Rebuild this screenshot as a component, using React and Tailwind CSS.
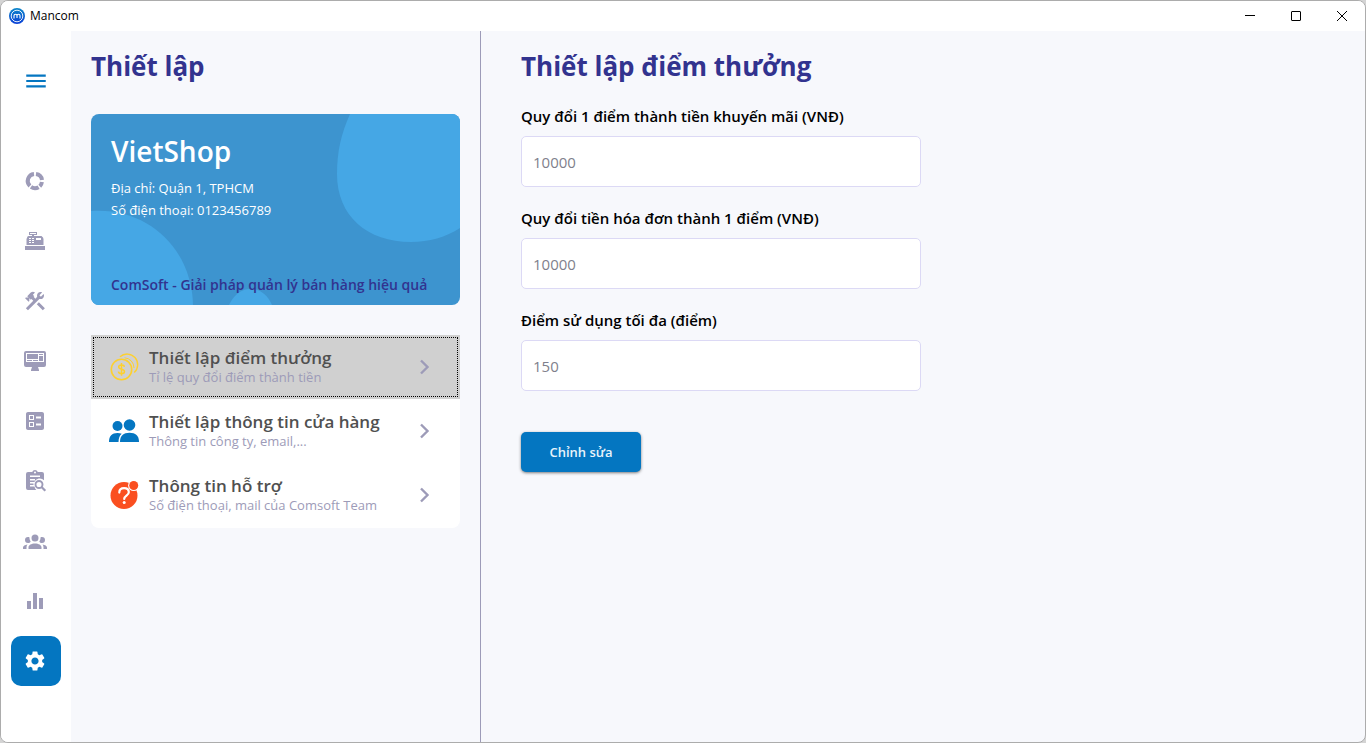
import React from "react";
import { MdBallot, MdEqualizer, MdMenu, MdSettings } from "react-icons/md";

function DonutIcon() {
  return (
    <svg viewBox="0 0 24 24" className="size-6" aria-hidden="true">
      <g fill="none" stroke="currentColor" strokeWidth="4">
        <path d="M13 5A7 7 0 0 1 19 11" />
        <path d="M18.9 13A7 7 0 0 1 16.8 17.200" />
        <path d="M15.600 18.200A7 7 0 0 1 8 17.900" />
        <path d="M6.900 17A7 7 0 0 1 11 5" />
      </g>
    </svg>
  );
}

function RegisterIcon() {
  return (
    <svg viewBox="0 0 24 24" className="size-6" aria-hidden="true">
      <path
        fill="currentColor"
        fillRule="evenodd"
        d="M2 17h20v4H2zM6 3h8v3h-3v1h7.500L20 8.500 20.500 10v6H3.500v-6L4.500 7.500 5.500 7H9V6H6zM7 4v1h6V4zM13 9v2h5V9zM6 9v1h2V9zM9 9v1h2V9zM6 11v1h2v-1zM9 11v1h2v-1zM6 13v1h2v-1zM9 13v1h2v-1z"
      />
    </svg>
  );
}

function ToolsIcon() {
  return (
    <svg viewBox="0 0 24 24" className="size-6" aria-hidden="true">
      <path
        fill="currentColor"
        d="M13.78 15.3L19.78 21.3L21.89 19.14L15.89 13.14L13.78 15.3M17.5 10.1C17.11 10.1 16.69 10.05 16.36 9.91L4.97 21.25L2.86 19.14L10.27 11.74L8.5 9.96L7.78 10.66L6.33 9.25V12.11L5.63 12.81L2.11 9.25L2.81 8.55H5.62L4.22 7.14L7.78 3.58C8.95 2.41 10.83 2.41 12 3.58L9.89 5.74L11.3 7.14L10.59 7.85L12.38 9.63L14.2 7.75C14.06 7.42 14 7 14 6.63C14 4.66 15.56 3.11 17.5 3.11C18.09 3.11 18.61 3.25 19.08 3.53L16.41 6.2L17.91 7.7L20.58 5.03C20.86 5.5 21 6 21 6.63C21 8.55 19.45 10.1 17.5 10.1Z"
      />
    </svg>
  );
}

function MonitorIcon() {
  return (
    <svg viewBox="0 0 24 24" className="size-6" aria-hidden="true">
      <path
        fill="currentColor"
        fillRule="evenodd"
        d="M3 2h18a2 2 0 0 1 2 2v12a2 2 0 0 1-2 2h-6l1 3v1H8v-1l1-3H3a2 2 0 0 1-2-2V4a2 2 0 0 1 2-2zM3 4v9h18V4zM4 5h11v5H4zM16 5h4v1h-4zM16 7h4v5h-4zM4 11h5v1H4zM10 11h5v1h-5z"
      />
    </svg>
  );
}

function ClipboardSearchIcon() {
  return (
    <svg viewBox="0 0 24 24" className="size-6" aria-hidden="true">
      <path
        fill="currentColor"
        fillRule="evenodd"
        d="M5 3h4.200a3 3 0 0 1 5.600 0H19a2 2 0 0 1 2 2v6.200A6 6 0 0 0 11.300 13H7v1.500h3.500V16H7v1.500h4.500a6 6 0 0 0 1.800 3.500H5a2 2 0 0 1-2-2V5a2 2 0 0 1 2-2zM12 2.500a1 1 0 1 0 0 2 1 1 0 0 0 0-2zM7 6.500V8h10V6.500zM7 10v1.500h5V10z"
      />
      <circle cx="16" cy="15.500" r="3.500" fill="none" stroke="currentColor" strokeWidth="1.900" />
      <path d="M18.500 18L22.300 21.800" stroke="currentColor" strokeWidth="2.200" />
    </svg>
  );
}

function GroupIcon() {
  return (
    <svg viewBox="0 0 24 24" className="size-6" aria-hidden="true">
      <path
        fill="currentColor"
        d="M12 5.500A3.500 3.500 0 0 1 15.500 9 3.500 3.500 0 0 1 12 12.500 3.500 3.500 0 0 1 8.500 9 3.500 3.500 0 0 1 12 5.500M5 8C5.560 8 6.080 8.150 6.530 8.420 6.380 9.850 6.800 11.270 7.660 12.380 7.160 13.340 6.160 14 5 14A3 3 0 0 1 2 11 3 3 0 0 1 5 8M19 8A3 3 0 0 1 22 11 3 3 0 0 1 19 14C17.840 14 16.840 13.340 16.340 12.380 17.200 11.270 17.620 9.850 17.470 8.420 17.920 8.150 18.440 8 19 8M5.500 18.250C5.500 16.180 8.410 14.500 12 14.500S18.500 16.180 18.500 18.250V20H5.500V18.250M0 20V18.500C0 17.110 1.890 15.940 4.450 15.600 3.860 16.280 3.500 17.220 3.500 18.250V20H0M24 20H20.500V18.250C20.500 17.220 20.140 16.280 19.550 15.600 22.110 15.940 24 17.110 24 18.500V20Z"
      />
    </svg>
  );
}

function CoinsIcon() {
  return (
    <svg viewBox="0 0 30 30" className="size-[30px]" aria-hidden="true">
      <g fill="none" stroke="#fdd02f">
        <circle cx="12.500" cy="17.500" r="10.200" strokeWidth="1.600" />
        <path d="M11 4.800A10.400 10.400 0 1 1 25.200 20.500" strokeWidth="1.400" />
        <path d="M15.500 5.800A10 10 0 0 1 25 16" strokeWidth="1" />
        <path
          d="M15.400 14.800c-.2-1.200-1.200-1.800-2.900-1.800-1.700 0-2.800.7-2.800 2.100 0 2.900 5.800 1.500 5.800 4.500 0 1.500-1.200 2.200-3 2.200s-2.900-.7-3.100-2.100M12.500 11v12.700"
          strokeWidth="1.500"
        />
      </g>
    </svg>
  );
}

function PeopleIcon() {
  return (
    <svg viewBox="0 0 30 30" className="size-[30px]" aria-hidden="true">
      <g fill="#0476c1">
        <circle cx="8.500" cy="10" r="5" />
        <circle cx="20.500" cy="9" r="5.800" />
        <path d="M0 26c0-6 3-9 8.500-9 1.500 0 3 .2 4.200.8C10.500 19.500 9.600 22.500 9.500 26z" />
        <path d="M11 26c0-6.500 3.500-9.300 9.500-9.300S30 19.500 30 26z" />
      </g>
    </svg>
  );
}

function HelpIcon() {
  return (
    <svg viewBox="0 0 30 30" className="size-[30px]" aria-hidden="true">
      <circle cx="15" cy="15.500" r="13.500" fill="#fa4f20" />
      <circle cx="24.700" cy="5.500" r="5.600" fill="#fff" />
      <circle cx="24.700" cy="5.500" r="4.500" fill="#fa4f20" />
      <path
        d="M10.300 12.600c0-2.700 2-4.400 4.800-4.400s4.700 1.600 4.700 4c0 3.300-4.600 3.500-4.600 6.700"
        fill="none"
        stroke="#fff"
        strokeWidth="2.200"
        strokeLinecap="round"
      />
      <circle cx="15.200" cy="22.600" r="1.500" fill="#fff" />
    </svg>
  );
}

function Logo() {
  return (
    <svg viewBox="0 0 16 16" className="size-4" aria-hidden="true">
      <defs>
        <linearGradient id="logo-blue" x1="0" y1="0" x2="0" y2="1">
          <stop offset="0" stopColor="#0b86c9" />
          <stop offset="1" stopColor="#0b3fd6" />
        </linearGradient>
      </defs>
      <circle cx="8" cy="8" r="8" fill="url(#logo-blue)" />
      <circle cx="8" cy="8" r="5.800" fill="none" stroke="#fff" strokeWidth="0.900" />
      <path
        d="M5 10.600V7.800a1.500 1.500 0 0 1 3 0V10M8 7.800a1.500 1.500 0 0 1 3 0v2.800"
        fill="none"
        stroke="#fff"
        strokeWidth="1.100"
      />
    </svg>
  );
}

const navItems = [
  { label: "Tổng quan", icon: <DonutIcon /> },
  { label: "Bán hàng", icon: <RegisterIcon /> },
  { label: "Sửa chữa", icon: <ToolsIcon /> },
  { label: "Sản phẩm", icon: <MonitorIcon /> },
  { label: "Danh mục", icon: <MdBallot className="size-6" /> },
  { label: "Hóa đơn", icon: <ClipboardSearchIcon /> },
  { label: "Khách hàng", icon: <GroupIcon /> },
  { label: "Thống kê", icon: <MdEqualizer className="size-6" /> },
  { label: "Thiết lập", icon: <MdSettings className="size-6" />, active: true },
];

const settings = [
  { title: "Thiết lập điểm thưởng", note: "Tỉ lệ quy đổi điểm thành tiền", icon: <CoinsIcon />, active: true },
  { title: "Thiết lập thông tin cửa hàng", note: "Thông tin công ty, email,...", icon: <PeopleIcon /> },
  { title: "Thông tin hỗ trợ", note: "Số điện thoại, mail của Comsoft Team", icon: <HelpIcon /> },
];

const fields = [
  { id: "point-value", label: "Quy đổi 1 điểm thành tiền khuyến mãi (VNĐ)", value: "10000" },
  { id: "bill-value", label: "Quy đổi tiền hóa đơn thành 1 điểm (VNĐ)", value: "10000" },
  { id: "max-points", label: "Điểm sử dụng tối đa (điểm)", value: "150" },
];

function TitleBar() {
  return (
    <header className="flex h-[30px] shrink-0 items-center bg-white pl-2">
      <Logo />
      <span className="ml-[5px] text-[12px] leading-4 text-black">Mancom</span>
      <div className="ml-auto flex h-full">
        <button type="button" aria-label="Thu nhỏ" className="flex w-[46px] items-center justify-center">
          <svg viewBox="0 0 10 10" className="size-[10px]" aria-hidden="true">
            <path d="M0 4.500h10" stroke="#000" />
          </svg>
        </button>
        <button type="button" aria-label="Phóng to" className="flex w-[46px] items-center justify-center">
          <svg viewBox="0 0 10 10" className="size-[10px]" aria-hidden="true">
            <rect x="0.500" y="0.500" width="9" height="9" rx="0.500" fill="none" stroke="#000" />
          </svg>
        </button>
        <button type="button" aria-label="Đóng" className="flex w-[46px] items-center justify-center">
          <svg viewBox="0 0 10 10" className="size-[10px]" aria-hidden="true">
            <path d="M0 0l10 10M10 0L0 10" stroke="#000" />
          </svg>
        </button>
      </div>
    </header>
  );
}

function Sidebar() {
  return (
    <aside className="flex w-[70px] shrink-0 flex-col items-center bg-white pt-[25px]">
      <button type="button" aria-label="Menu" className="flex size-[50px] items-center justify-center text-[#0476c1]">
        <MdMenu className="size-[26px]" />
      </button>
      <nav className="mt-[50px] flex flex-col gap-[10px]">
        {navItems.map((item) => (
          <button
            key={item.label}
            type="button"
            aria-label={item.label}
            className={
              item.active
                ? "flex size-[50px] items-center justify-center rounded-[10px] bg-[#0476c1] pr-0.5 text-white"
                : "flex size-[50px] items-center justify-center rounded-[10px] pr-0.5 text-[#9d9bb8]"
            }
          >
            {item.icon}
          </button>
        ))}
      </nav>
    </aside>
  );
}

function ShopCard() {
  return (
    <section className="relative mt-7 flex h-[191px] flex-col overflow-hidden rounded-[8px] bg-[#3d94cf] px-5 pt-[19px] pb-[9px]">
      <svg viewBox="0 0 369 191" preserveAspectRatio="none" className="absolute inset-0 size-full" aria-hidden="true">
        <g fill="#45a7e5">
          <path d="M259 0C250 20 246 38 246 60C246 102 276 128 320 128C338 128 355 123 369 114V0z" />
          <path d="M0 97C58 93 101 136 102 191H0z" />
          <path d="M138 191C144 179 151 175 160 175C169 175 176 180 181 191z" />
        </g>
      </svg>
      <h2 className="relative text-[28px] leading-9 font-semibold text-white">VietShop</h2>
      <p className="relative mt-2 text-[13px] leading-[22px] text-white">Địa chỉ: Quận 1, TPHCM</p>
      <p className="relative text-[13px] leading-[22px] text-white">Số điện thoại: 0123456789</p>
      <p className="relative mt-auto text-[14px] leading-[22px] font-semibold whitespace-nowrap text-[#32338f]">
        ComSoft - Giải pháp quản lý bán hàng hiệu quả
      </p>
    </section>
  );
}

function SettingsList() {
  return (
    <ul className="mt-[30px] overflow-hidden rounded-b-[8px] bg-white pb-px">
      {settings.map((item) => (
        <li key={item.title}>
          <button
            type="button"
            className={
              item.active
                ? "relative flex h-16 w-full items-center bg-[#d0d0d0] pr-[27px] pl-[18px] text-left"
                : "flex h-16 w-full items-center pr-[27px] pl-[18px] text-left"
            }
          >
            {item.active && <span className="absolute inset-x-0.5 inset-y-0.5 border border-dotted border-black" />}
            {item.icon}
            <span className="ml-[10px] flex flex-col pb-0.5 whitespace-nowrap">
              <span className="text-[17px] leading-[22px] font-semibold text-[#505050]">{item.title}</span>
              <span className="text-[13px] leading-[17px] text-[#9d9bb8]">{item.note}</span>
            </span>
            <svg viewBox="0 0 16 16" className="ml-auto size-4" aria-hidden="true">
              <path d="M4 1.500L10.500 8L4 14.500" fill="none" stroke="#9d9bb8" strokeWidth="2.400" />
            </svg>
          </button>
        </li>
      ))}
    </ul>
  );
}

function PointsForm() {
  return (
    <main className="flex-1 pt-[15px] pl-10">
      <h1 className="text-[26px] leading-10 font-bold text-[#32338f]">Thiết lập điểm thưởng</h1>
      <form className="mt-[18px] flex max-w-[400px] flex-col gap-[19px]" onSubmit={(e) => e.preventDefault()}>
        {fields.map((field) => (
          <div key={field.id} className="flex flex-col gap-2">
            <label htmlFor={field.id} className="text-[15px] leading-6 font-semibold text-black">
              {field.label}
            </label>
            <input
              id={field.id}
              type="text"
              defaultValue={field.value}
              readOnly
              className="h-[51px] w-full rounded-[5px] border border-[#dcd9f5] bg-white px-[11px] text-[15px] text-[#7f7f8c] outline-none"
            />
          </div>
        ))}
        <button
          type="submit"
          className="mt-[22px] h-10 w-[120px] rounded-[5px] bg-[#0476c1] pt-0.5 text-[13px] font-semibold text-[#e8f3fb] shadow-[0_1px_3px_rgba(0,0,0,0.5)]"
        >
          Chỉnh sửa
        </button>
      </form>
    </main>
  );
}

export default function App() {
  return (
    <div className="flex min-h-screen bg-[#d4d4d4] font-['Open_Sans','Noto_Sans',sans-serif]">
      <div className="flex flex-1 flex-col overflow-hidden rounded-[8px] border border-[#acacac] bg-[#f7f8fc]">
        <TitleBar />
        <div className="flex flex-1">
          <Sidebar />
          <section className="w-[410px] shrink-0 border-r border-[#9d9bb8] px-5 pt-[15px]">
            <h1 className="text-[26px] leading-10 font-bold text-[#32338f]">Thiết lập</h1>
            <ShopCard />
            <SettingsList />
          </section>
          <PointsForm />
        </div>
      </div>
    </div>
  );
}
